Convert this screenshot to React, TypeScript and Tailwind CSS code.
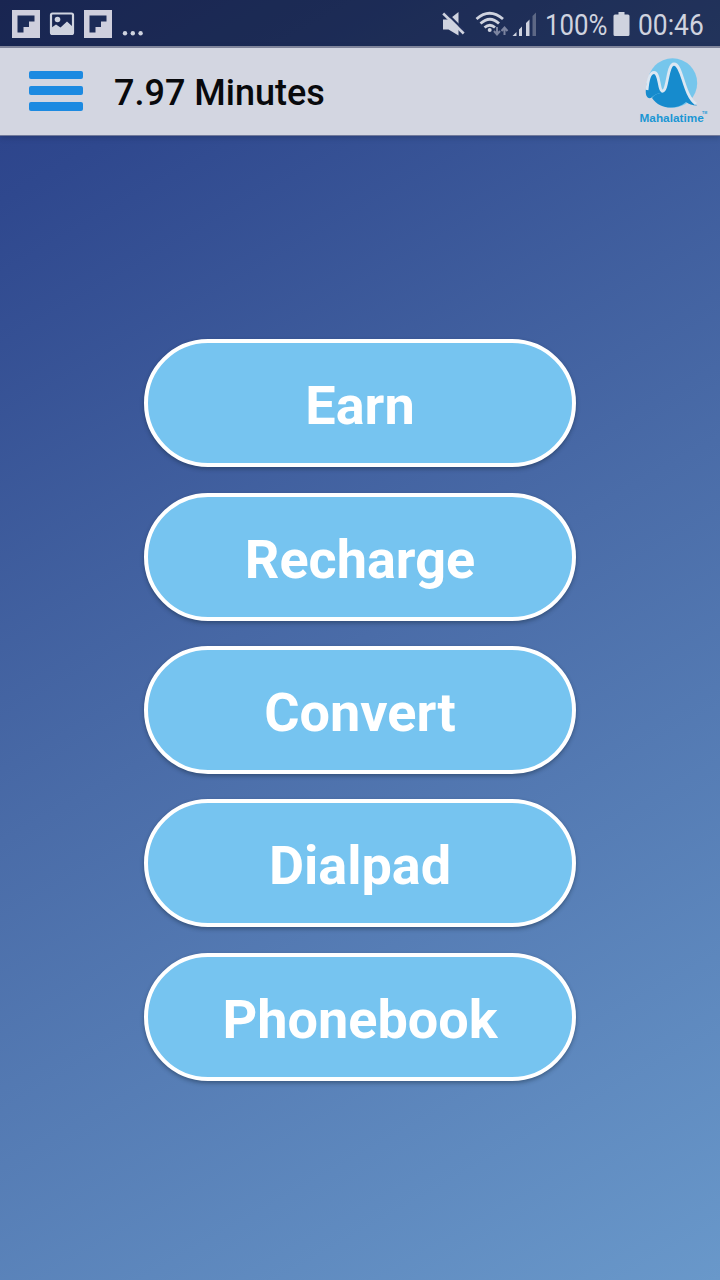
const MENU_ITEMS = ["Earn", "Recharge", "Convert", "Dialpad", "Phonebook"];

export default function App() {
  return (
    <div className="flex h-[1280px] w-[720px] flex-col overflow-hidden bg-[linear-gradient(150.6deg,#2a3f88_0%,#2f488e_12%,#4a6ca8_50%,#6998ca_100%)] font-['Roboto',sans-serif]">
      <StatusBar />
      <Header minutes="7.97" />

      <main className="flex flex-1 flex-col items-center gap-[25.49px] pt-[203.04px]">
        {MENU_ITEMS.map((label) => (
          <MenuButton key={label} label={label} />
        ))}
      </main>
    </div>
  );
}

function StatusBar() {
  return (
    <div className="flex h-[46px] shrink-0 items-start bg-black/40 text-[#cfd3df]">
      {/* Notifications */}
      <div className="flex gap-2 pt-2.5 pl-3">
        <FlipboardIcon />
        <PictureIcon />
        <FlipboardIcon />
        <svg width="24" height="28" viewBox="0 0 24 28" fill="currentColor">
          <circle cx="5" cy="23.3" r="2.2" />
          <circle cx="12.8" cy="23.3" r="2.2" />
          <circle cx="20.6" cy="23.3" r="2.2" />
        </svg>
      </div>

      {/* System icons */}
      <div className="ml-auto flex">
        <svg width="100" height="46" viewBox="440 0 100 46" fill="currentColor">
          <path d="M443 19.5h6l9.5-7.5v23.5l-10-6h-5.5z" />
          <path d="M445 11.5l20 20" stroke="#21305c" strokeWidth="2.4" />
          <path d="M443.2 13.5l20.5 20" stroke="currentColor" strokeWidth="2.6" />
          <g fill="none" stroke="currentColor" strokeWidth="2.8">
            <path d="M476.5 19q13-11.5 26.5 0" />
            <path d="M480.5 23.5q9.5-8.5 18.5 0" />
            <path d="M484.5 27.5q5.5-4.5 10.5 0" />
          </g>
          <circle cx="489.7" cy="30" r="2" />
          <g fill="none" stroke="#7c84a0" strokeWidth="2">
            <path d="M497 27v7m-3-3l3 3.5l3-3.5M504.5 35v-7m-3 3l3-3.5l3 3.5" />
          </g>
          <path d="M512.5 36l4-4v4zM519 29.5l3-3v9.5h-3zM526 23l3.5-3.5v16.5h-3.5z" />
          <path d="M532.5 16l3.5-3.5v23.5h-3.5z" fill="#5d6885" />
        </svg>
        <div className="w-[73px] pt-[7px] pl-[5px]">
          <span className="inline-block origin-left scale-x-[0.86] text-[30px] leading-9">100%</span>
        </div>
        <svg width="18" height="46" viewBox="0 0 18 46" fill="currentColor">
          <path d="M5.5 12h6v2.5h3.5q1.5 0 1.500 1.500v18.500q0 1.500-1.500 1.500h-13q-1.500 0-1.500-1.500v-18.500q0-1.500 1.500-1.500h3.500z" />
        </svg>
        <div className="w-[89px] pt-[7px] pl-[7px]">
          <span className="inline-block origin-left scale-x-[0.88] text-[30px] leading-9">00:46</span>
        </div>
      </div>
    </div>
  );
}

function FlipboardIcon() {
  return (
    <svg width="28" height="28" viewBox="0 0 28 28">
      <path d="M0 0h28v28h-28z" fill="#cfcfdd" />
      <path d="M5.5 5.5h17v6h-5.5v5.500h-5.500v5.500h-6z" fill="#1c2b57" />
    </svg>
  );
}

function PictureIcon() {
  return (
    <svg width="28" height="28" viewBox="0 0 28 28">
      <rect x="3" y="3.5" width="22" height="20.5" rx="1.5" fill="none" stroke="currentColor" strokeWidth="2.2" />
      <circle cx="9.5" cy="9.5" r="2.8" fill="currentColor" />
      <path d="M3 18l5-3.5l4.5 3l6.5-6l6 5.5v7h-22z" fill="currentColor" />
    </svg>
  );
}

function Header({ minutes }: { minutes: string }) {
  return (
    <header className="flex h-[90px] shrink-0 items-center border-t-2 border-b border-t-[#80859b] border-b-[#717a9b] bg-[#d3d6e1] pl-[29px] shadow-[0_2px_5px_rgba(20,30,60,0.25)]">
      <button className="flex w-[54px] flex-col gap-[7.25px] pb-[2px]" aria-label="Menu">
        <span className="h-[8.5px] w-full rounded-xs bg-[#1c8ae1]" />
        <span className="h-[8.5px] w-full rounded-xs bg-[#1c8ae1]" />
        <span className="h-[8.5px] w-full rounded-xs bg-[#1c8ae1]" />
      </button>
      <h1 className="ml-[31px] pt-0.5 text-[36px] leading-10 font-medium text-[#08090c]">{minutes} Minutes</h1>
      <Logo />
    </header>
  );
}

function Logo() {
  return (
    <svg className="ml-auto" width="84" height="86" viewBox="636 49 84 86">
      <circle cx="672.5" cy="83" r="24.7" fill="#76c6ec" />
      {/* Small wave */}
      <path d="M646 88C647 80 650 74 654 74C658 74 659 90 662 93C657 93 654 95 651 98C647 99 645 95 646 88Z" fill="#168bcd" />
      {/* Large wave */}
      <path
        d="M652 98C655 94 659 93 662 93C669 91 667 66 674 66C683 66 684 96 697 105.500C692 105.500 689 104 686 102C677 110 660 110 652 98Z"
        fill="#168bcd"
      />
      <path
        d="M647 90C648 79 650 72.5 654 72.5C660 72.5 658.5 91 662.5 91C668 91 667 64 674 64C682.500 64 683 95 696 104"
        fill="none"
        stroke="#dce7f2"
        strokeWidth="2.8"
      />
      <text x="639.5" y="121.5" fill="#1b96d4" className="font-['Liberation_Sans',sans-serif] text-[11.8px] font-bold">
        Mahalatime
        <tspan x="702" y="113.500" className="text-[3.5px]">TM</tspan>
      </text>
    </svg>
  );
}

function MenuButton({ label }: { label: string }) {
  return (
    <button className="flex h-32 w-[432px] shrink-0 items-center justify-center rounded-full border-4 border-white bg-[#76c4f0] pt-1.5 text-[54px] leading-none font-bold text-white shadow-[0_2px_4px_rgba(20,40,60,0.45)]">
      {label}
    </button>
  );
}
